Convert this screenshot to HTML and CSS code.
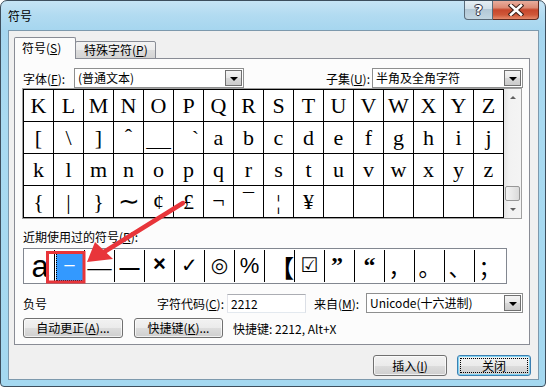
FILE: index.html
```html
<html>

<head>
   <title>符号</title>
   <link rel="stylesheet" href="styles.css">
</head>

<body>
<div class="window">
   <div class="titlebar">
      <span class="title">符号</span>
      <div class="caption">
         <span class="cap-help">?</span>
         <span class="cap-close">
            <svg width="16" height="12" viewBox="0 0 16 12">
               <path d="M3 1.5 L13 10.5 M13 1.5 L3 10.5" stroke="#3b2019" stroke-width="4.6" stroke-linecap="square"/>
               <path d="M3 1.5 L13 10.5 M13 1.5 L3 10.5" stroke="#fff" stroke-width="2.6" stroke-linecap="square"/>
            </svg>
         </span>
      </div>
   </div>

   <div class="client">
      <div class="tabs">
         <div class="tab active">符号(<u>S</u>)</div>
         <div class="tab">特殊字符(<u>P</u>)</div>
      </div>

      <div class="panel">
         <div class="row font-row">
            <span class="font-label">字体(<u>F</u>):</span>
            <div class="combo combo-font"><span class="combo-text">(普通文本)</span><span class="drop"><i></i></span></div>
            <span class="spacer"></span>
            <span>子集(<u>U</u>):</span>
            <div class="combo combo-subset"><span class="combo-text">半角及全角字符</span><span class="drop"><i></i></span></div>
         </div>

         <div class="charmap">
            <div class="grid">
               <span>K</span><span>L</span><span>M</span><span>N</span><span>O</span><span>P</span><span>Q</span><span>R</span>
               <span>S</span><span>T</span><span>U</span><span>V</span><span>W</span><span>X</span><span>Y</span><span>Z</span>
               <span>[</span><span>\</span><span>]</span><span class="top">ˆ</span><span class="under"><b>_</b></span><span class="grave">`</span><span>a</span><span>b</span>
               <span>c</span><span>d</span><span>e</span><span>f</span><span>g</span><span>h</span><span>i</span><span>j</span>
               <span>k</span><span>l</span><span>m</span><span>n</span><span>o</span><span>p</span><span>q</span><span>r</span>
               <span>s</span><span>t</span><span>u</span><span>v</span><span>w</span><span>x</span><span>y</span><span>z</span>
               <span>{</span><span>|</span><span>}</span><span class="wide">∼</span><span>¢</span><span>£</span><span class="top">¬</span><span class="top">¯</span>
               <span>¦</span><span>¥</span><span></span><span></span><span></span><span></span><span></span><span></span>
            </div>
            <div class="vscroll">
               <span class="sbtn"><i class="up"></i></span>
               <span class="track"><span class="thumb"></span></span>
               <span class="sbtn"><i class="down"></i></span>
            </div>
         </div>

         <div class="recent-label">近期使用过的符号(<u>R</u>):</div>
         <div class="recent">
            <span class="rc sans-a">a</span>
            <span class="rc"><span class="sel">−</span></span>
            <span class="rc dash">—</span>
            <span class="rc bold-dash">—</span>
            <span class="rc times">×</span>
            <span class="rc sym">✓</span>
            <span class="rc sym">◎</span>
            <span class="rc pct">%</span>
            <span class="rc cjk bracket">【</span>
            <span class="rc sym">☑</span>
            <span class="rc quote left">”</span>
            <span class="rc quote">“</span>
            <span class="rc cjk">，</span>
            <span class="rc cjk">。</span>
            <span class="rc cjk">、</span>
            <span class="rc cjk">；</span>
         </div>

         <div class="row info-row">
            <span class="sym-name">负号</span>
            <span class="code-label">字符代码(<u>C</u>):</span>
            <span class="textbox">2212</span>
            <span class="from-label">来自(<u>M</u>):</span>
            <div class="combo combo-from"><span class="combo-text">Unicode(十六进制)</span><span class="drop"><i></i></span></div>
         </div>

         <div class="row btn-row">
            <span class="btn btn-auto">自动更正(<u>A</u>)...</span>
            <span class="btn btn-key">快捷键(<u>K</u>)...</span>
            <span class="key-text">快捷键: 2212, Alt+X</span>
         </div>
      </div>

      <div class="footer">
         <span class="btn btn-foot">插入(<u>I</u>)</span>
         <span class="btn btn-foot default"><span class="focus">关闭</span></span>
      </div>
   </div>

   <svg class="annot" width="546" height="387" viewBox="0 0 546 387">
      <rect x="47.5" y="252.5" width="36.5" height="29.5" fill="none" stroke="#e8353a" stroke-width="3"/>
      <path d="M104 252 L183 203" stroke="#e8353a" stroke-width="4.5" stroke-linecap="round"/>
      <polygon points="87,262 95,242 113,259" fill="#e8353a"/>
   </svg>
</div>
</body>

</html>
```

FILE: styles.css
```css
* {
   box-sizing: border-box;
}

body {
   margin: 0;
   background: #fff;
   color: #000;
   font: 12px "Noto Sans CJK SC", sans-serif;
}

u {
   text-decoration: underline;
   text-underline-offset: 1px;
}

.window {
   position: relative;
   width: 546px;
   height: 387px;
   border: 1px solid #3d4e5d;
   border-radius: 7px 7px 4px 4px;
   background: linear-gradient(180deg, #c6e4f5 0, #b2dbf1 14px, #a6d6ef 29px, #a9daf1 120px, #a4d8f0 100%);
   display: flex;
   flex-direction: column;
   overflow: hidden;
}

/* title bar */

.titlebar {
   height: 29px;
   flex: none;
   display: flex;
   align-items: flex-start;
   justify-content: space-between;
}

.title {
   padding: 7px 0 0 7px;
   line-height: 16px;
}

.caption {
   display: flex;
   margin: -1px 6px 0 0;
   height: 20px;
}

.cap-help,
.cap-close {
   height: 20px;
   display: flex;
   align-items: center;
   justify-content: center;
   border: 1px solid #5a6b79;
   border-top: none;
}

.cap-help {
   width: 29px;
   border-radius: 0 0 0 4px;
   background: linear-gradient(180deg, #e8f0f5 0, #d2e0e9 45%, #b3c8d6 50%, #c2d6e2 100%);
   color: #fff;
   font: bold 14px "DejaVu Sans", sans-serif;
   text-shadow: 0 0 1px #223, 1px 0 0 #334, -1px 0 0 #334, 0 1px 0 #334, 0 -1px 0 #334;
}

.cap-close {
   width: 46px;
   border-left: none;
   border-color: #5e2a20;
   border-radius: 0 0 4px 0;
   background: linear-gradient(180deg, #eab2a3 0, #dc8b75 40%, #c7472c 52%, #cf5738 78%, #e58b6c 100%);
}

/* dialog body */

.client {
   flex: none;
   height: 350px;
   margin: 0 6px 0 7px;
   border: 1px solid #7d99ad;
   background: #f0f0f0;
   padding: 6px 8px 0 5px;
}

.tabs {
   position: relative;
   z-index: 1;
   display: flex;
   align-items: flex-end;
   height: 22px;
   margin-bottom: -1px;
}

.tab {
   height: 18px;
   width: 81px;
   margin-left: -1px;
   padding-left: 8px;
   border: 1px solid #898c95;
   border-radius: 2px 2px 0 0;
   background: linear-gradient(180deg, #f3f3f3 0, #ebebeb 50%, #dddddd 51%, #d4d4d4 100%);
   line-height: 16px;
}

.tab.active {
   position: relative;
   z-index: 2;
   height: 22px;
   width: 62px;
   margin-left: 0;
   padding: 2px 0 0 7px;
   border-bottom: none;
   background: #fcfcfc;
}

.panel {
   height: 287px;
   border: 1px solid #898c95;
   background: #fcfcfc;
   padding: 9px 6px 0 8px;
}

.row {
   display: flex;
   align-items: center;
}

.font-row {
   height: 20px;
}

.font-label {
   width: 51px;
}

.spacer {
   flex: 1;
}

.combo {
   height: 20px;
   display: flex;
   align-items: center;
   border: 1px solid #8e8f8f;
   background: #fff;
   padding: 1px;
}

.combo-font {
   width: 170px;
}

.combo-subset {
   width: 151px;
   margin-left: 2px;
}

.combo-text {
   flex: 1;
   padding-left: 2px;
   line-height: 16px;
   white-space: nowrap;
   overflow: hidden;
}

.drop {
   width: 17px;
   height: 16px;
   display: flex;
   align-items: center;
   justify-content: center;
   border: 1px solid #707070;
   background: linear-gradient(180deg, #f4f4f4 0, #e6e6e6 50%, #d8d8d8 51%, #cbcbcb 100%);
}

.drop i {
   width: 0;
   height: 0;
   border-left: 4px solid transparent;
   border-right: 4px solid transparent;
   border-top: 4px solid #000;
   margin-top: 1px;
}

/* character map */

.charmap {
   display: flex;
   width: 500px;
   margin-left: -1px;
   border: 1px solid #a0a0a0;
}

.grid {
   display: grid;
   grid-template-columns: repeat(16, 29px);
   grid-auto-rows: 31px;
   gap: 1px;
   background: #000;
   border: 1px solid #000;
}

.grid span {
   display: flex;
   align-items: center;
   justify-content: center;
   background: #fff;
   font: 22px "Liberation Serif", serif;
   line-height: 1;
}

.grid .top {
   align-items: flex-start;
   padding-top: 4px;
}

.grid .under {
   align-items: flex-end;
   padding-bottom: 3px;
}

.grid .under b {
   font-weight: normal;
   display: inline-block;
   transform: scaleX(2.2);
}

.grid .grave {
   justify-content: flex-end;
   align-items: flex-start;
   padding: 6px 4px 0 0;
}

.grid .wide {
   font-size: 26px;
}

.vscroll {
   width: 17px;
   display: flex;
   flex-direction: column;
   background: linear-gradient(90deg, #e4e4e4 0, #f2f2f2 30%, #f4f4f4 100%);
}

.sbtn {
   height: 17px;
   display: flex;
   align-items: center;
   justify-content: center;
}

.sbtn i {
   width: 0;
   height: 0;
   border-left: 3px solid transparent;
   border-right: 3px solid transparent;
}

.sbtn .up {
   border-bottom: 3px solid #606060;
}

.sbtn .down {
   border-top: 3px solid #606060;
}

.track {
   flex: 1;
   display: flex;
   flex-direction: column;
   justify-content: flex-end;
   padding: 0 1px;
}

.thumb {
   height: 15px;
   border: 1px solid #979797;
   border-radius: 2px;
   background: linear-gradient(90deg, #f4f4f4 0, #e8e8e8 50%, #dadada 100%);
}

/* recent symbols */

.recent-label {
   margin-top: 10px;
   line-height: 16px;
}

.recent {
   display: flex;
   width: 484px;
   height: 36px;
   margin-top: 3px;
   padding-right: 2px;
   border: 1px solid #828790;
   background: #fff;
}

.rc {
   width: 30px;
   margin: 1px 0;
   border-left: 1px solid #000;
   display: flex;
   align-items: center;
   justify-content: center;
   overflow: hidden;
   font: 22px "Liberation Serif", serif;
   line-height: 1;
}

.rc:first-child {
   border-left: none;
}

.sans-a {
   font: 31px "Liberation Sans", sans-serif;
   padding: 1px 0 0 2px;
}

.sel {
   width: 28px;
   height: 29px;
   display: flex;
   align-items: center;
   justify-content: center;
   background: #3399ff;
   color: #fff;
   outline: 1px dotted #000;
   outline-offset: -1px;
   font-size: 22px;
}

.dash {
   align-items: flex-end;
   padding-bottom: 5px;
   font-size: 24px;
   line-height: 20px;
}

.bold-dash {
   font: bold 20px "Liberation Sans", sans-serif;
   padding-top: 2px;
}

.times {
   font: bold 22px "Liberation Sans", sans-serif;
   padding-bottom: 5px;
}

.sym {
   font: 20px "DejaVu Sans", sans-serif;
   padding-bottom: 3px;
}

.pct {
   font: 22px "Liberation Sans", sans-serif;
}

.cjk {
   font: 22px "Noto Sans CJK SC", sans-serif;
}

.bracket {
   justify-content: flex-end;
   font-weight: bold;
   font-size: 24px;
}

.quote {
   align-items: flex-start;
   padding-top: 3px;
   font: bold 24px "Liberation Serif", serif;
   line-height: 24px;
}

.quote.left {
   justify-content: flex-start;
   padding-left: 6px;
}

/* info rows */

.info-row {
   height: 20px;
   margin-top: 9px;
}

.sym-name {
   width: 129px;
}

.code-label {
   width: 72px;
   text-align: right;
}

.textbox {
   width: 79px;
   height: 19px;
   margin-left: 3px;
   padding-left: 3px;
   line-height: 17px;
   border: 1px solid #abadb3;
   border-color: #abadb3 #dbdfe6 #e3e9ef #e2e3ea;
   background: #fff;
}

.from-label {
   margin-left: 8px;
   width: 50px;
}

.combo-from {
   flex: 1;
   margin-left: 2px;
}

.btn-row {
   height: 20px;
   margin-top: 5px;
}

.btn {
   height: 20px;
   display: flex;
   align-items: center;
   justify-content: center;
   border: 1px solid #707070;
   border-radius: 3px;
   background: linear-gradient(180deg, #f2f2f2 0, #ebebeb 50%, #dddddd 51%, #cfcfcf 100%);
   box-shadow: inset 0 0 0 1px rgba(255, 255, 255, .7);
   line-height: 16px;
}

.btn-auto {
   width: 100px;
}

.btn-key {
   width: 89px;
   margin-left: 11px;
}

.key-text {
   margin-left: 10px;
}

/* footer buttons */

.footer {
   display: flex;
   justify-content: flex-end;
   gap: 10px;
   margin: 10px -1px 0 0;
}

.btn-foot {
   width: 74px;
   height: 21px;
}

.btn-foot.default {
   border-color: #3c7fb1;
   box-shadow: inset 0 0 0 1px #7fd3f3;
   padding: 3px;
}

.focus {
   width: 100%;
   height: 100%;
   display: flex;
   align-items: center;
   justify-content: center;
   outline: 1px dotted #000;
}

/* overlay annotation */

.annot {
   position: absolute;
   left: -1px;
   top: -1px;
   pointer-events: none;
}
```
